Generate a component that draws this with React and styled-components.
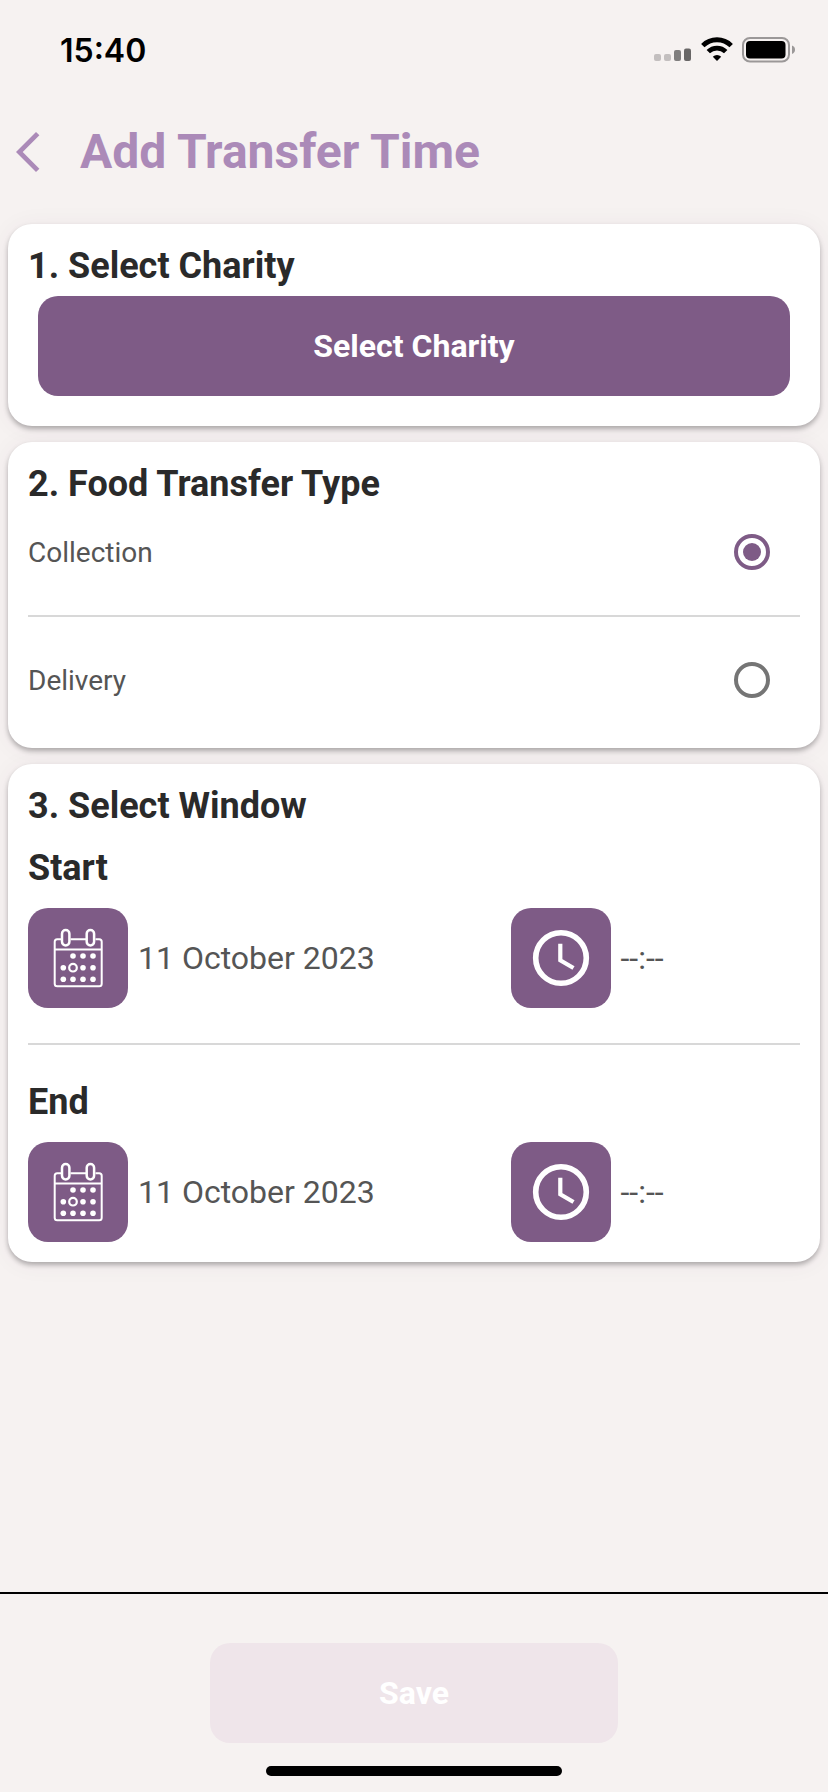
import React, { useState } from 'react'
import styled, { createGlobalStyle } from 'styled-components'

const App = () => {
  const [type, setType] = useState('collection')

  return (
    <Page>
      <GlobalStyle />
      <StatusBar>
        <Clock>15:40</Clock>
        <StatusIcons>
          <SignalIcon />
          <WifiIcon />
          <BatteryIcon />
        </StatusIcons>
      </StatusBar>
      <Header>
        <BackButton type="button" aria-label="Back">
          <svg width="24" height="40" viewBox="0 0 24 40">
            <path d="M20 0 23.4 3.2 6.7 20 23.4 36.8 20 40 0 20z" fill="currentColor" />
          </svg>
        </BackButton>
        <Title>Add Transfer Time</Title>
      </Header>
      <Main>
        <Card>
          <Heading>1. Select Charity</Heading>
          <CharityRow>
            <Button type="button">Select Charity</Button>
          </CharityRow>
        </Card>
        <Card>
          <Heading id="transfer-type">2. Food Transfer Type</Heading>
          <div role="radiogroup" aria-labelledby="transfer-type">
            <Option>
              Collection
              <Radio
                name="type"
                checked={type === 'collection'}
                onChange={() => setType('collection')}
              />
            </Option>
            <Divider $space={15} />
            <Option>
              Delivery
              <Radio
                name="type"
                checked={type === 'delivery'}
                onChange={() => setType('delivery')}
              />
            </Option>
          </div>
        </Card>
        <Card>
          <Heading>3. Select Window</Heading>
          <WindowTime label="Start" date="11 October 2023" time="--:--" spaced />
          <Divider $space={35} />
          <WindowTime label="End" date="11 October 2023" time="--:--" />
        </Card>
      </Main>
      <Footer>
        <SaveButton type="button" disabled>
          Save
        </SaveButton>
        <HomeIndicator />
      </Footer>
    </Page>
  )
}

const WindowTime = ({ label, date, time, spaced }) => (
  <>
    <SubHeading $spaced={spaced}>{label}</SubHeading>
    <Pickers>
      <Picker>
        <IconButton type="button" aria-label={`${label} date`}>
          <CalendarIcon />
        </IconButton>
        <Value>{date}</Value>
      </Picker>
      <Picker>
        <IconButton type="button" aria-label={`${label} time`}>
          <ClockIcon />
        </IconButton>
        <Value>{time}</Value>
      </Picker>
    </Pickers>
  </>
)

const SignalIcon = () => (
  <svg width="38" height="26" viewBox="0 0 38 26">
    <rect x="0" y="17" width="7" height="7" rx="2" fill="#c3bfbf" />
    <rect x="10" y="17" width="7" height="7" rx="2" fill="#c3bfbf" />
    <rect x="20" y="13" width="7" height="11" rx="2" fill="#807e7e" />
    <rect x="30" y="11.5" width="7" height="12.5" rx="2" fill="#686666" />
  </svg>
)

const WifiIcon = () => (
  <svg width="32" height="26" viewBox="0 0 32 26">
    <g fill="none" stroke="#000" strokeWidth="4.8">
      <path d="M1.8 8.6a20.2 20.2 0 0 1 28.4 0" />
      <path d="M7.3 14.6a12.4 12.4 0 0 1 17.4 0" />
    </g>
    <path d="M16 24l-4.2-4.3a6 6 0 0 1 8.4 0z" fill="#000" />
  </svg>
)

const BatteryIcon = () => (
  <svg width="54" height="26" viewBox="0 0 54 26">
    <rect x="1" y="1" width="46" height="23.5" rx="7" fill="none" stroke="#9b9898" strokeWidth="2" />
    <rect x="4" y="4" width="39.5" height="17.5" rx="4" fill="#000" />
    <path d="M50 8.5c2 .6 3 2.2 3 4.2s-1 3.6-3 4.2z" fill="#9b9898" />
  </svg>
)

const CalendarIcon = () => (
  <svg width="100" height="100" viewBox="0 0 100 100">
    <g fill="none" stroke="#fff" strokeWidth="2">
      <path d="M33 31.2H29.2a2.5 2.5 0 0 0-2.5 2.5V75.8a2.5 2.5 0 0 0 2.5 2.5H71.2a2.5 2.5 0 0 0 2.5-2.5V33.700a2.500 2.500 0 0 0-2.500-2.500H67.500M42.500 31.200H58M26.700 41.500H73.700" />
      <rect x="34" y="22" width="7.4" height="15.5" rx="3.7" strokeWidth="2.5" />
      <rect x="58.7" y="22" width="7.4" height="15.5" rx="3.7" strokeWidth="2.5" />
      <circle cx="45" cy="59.7" r="3.8" strokeWidth="2.2" />
    </g>
    <g fill="#fff">
      <circle cx="45" cy="48" r="2.8" />
      <circle cx="55" cy="48" r="2.8" />
      <circle cx="65" cy="48" r="2.8" />
      <circle cx="35.3" cy="59.7" r="2.8" />
      <circle cx="55" cy="59.7" r="2.8" />
      <circle cx="65" cy="59.7" r="2.8" />
      <circle cx="35.3" cy="71.3" r="2.8" />
      <circle cx="45" cy="71.3" r="2.8" />
      <circle cx="55" cy="71.3" r="2.8" />
      <circle cx="65" cy="71.3" r="2.8" />
    </g>
  </svg>
)

const ClockIcon = () => (
  <svg width="100" height="100" viewBox="0 0 100 100">
    <g fill="none" stroke="#fff">
      <circle cx="50" cy="50" r="25.3" strokeWidth="5.6" />
      <path d="M49.3 35.7V52.3L62.5 60" strokeWidth="4.2" />
    </g>
  </svg>
)

const GlobalStyle = createGlobalStyle`
  * {
    box-sizing: border-box;
  }
  body {
    margin: 0;
    background: #f6f2f1;
    font-family: 'Roboto', sans-serif;
  }
  svg {
    display: block;
  }
`

const Page = styled.div`
  min-height: 100vh;
  display: flex;
  flex-direction: column;
`

const StatusBar = styled.div`
  height: 100px;
  padding: 0 32px 0 60px;
  display: flex;
  align-items: center;
  justify-content: space-between;
`

const Clock = styled.span`
  font-family: 'Inter', sans-serif;
  font-weight: 600;
  font-size: 32px;
  color: #000;
`

const StatusIcons = styled.div`
  display: flex;
  gap: 9px;
`

const Header = styled.header`
  height: 104px;
  padding: 0 16px;
  display: flex;
  align-items: center;
  gap: 40px;
  color: #ab8ab8;
`

const BackButton = styled.button`
  padding: 0;
  border: 0;
  background: none;
  color: inherit;
`

const Title = styled.h1`
  margin: 0;
  font-weight: 700;
  font-size: 48px;
  line-height: 56px;
`

const Main = styled.main`
  flex: 1;
  padding: 20px 8px;
  display: flex;
  flex-direction: column;
  gap: 16px;
`

const Card = styled.section`
  padding: 20px;
  border-radius: 24px;
  background: #fff;
  box-shadow: 0 3px 5px rgba(0, 0, 0, 0.28), 0 2px 24px rgba(80, 40, 90, 0.06);
`

const Heading = styled.h2`
  height: 42px;
  margin: 0;
  font-weight: 700;
  font-size: 36px;
  line-height: 44px;
  color: #2a2a2a;
`

const SubHeading = styled(Heading).attrs({ as: 'h3' })`
  margin: ${({ $spaced }) => ($spaced ? '20px' : '0')} 0 20px;
`

const CharityRow = styled.div`
  padding: 10px;
`

const Button = styled.button`
  display: block;
  width: 100%;
  height: 100px;
  border: 0;
  border-radius: 20px;
  background: #7e5b86;
  font-family: inherit;
  font-weight: 700;
  font-size: 32px;
  color: #fff;
`

const SaveButton = styled(Button)`
  max-width: 408px;
  background: #efe5ea;
`

const Option = styled.label`
  height: 96px;
  padding-right: 30px;
  display: flex;
  align-items: center;
  justify-content: space-between;
  font-size: 28px;
  color: #555;
`

const Radio = styled.input.attrs({ type: 'radio' })`
  appearance: none;
  width: 36px;
  height: 36px;
  margin: 0;
  border: 4px solid #757575;
  border-radius: 50%;
  display: grid;
  place-items: center;
  &:checked {
    border-color: #7e5b86;
  }
  &:checked::before {
    content: '';
    width: 18px;
    height: 18px;
    border-radius: 50%;
    background: #7e5b86;
  }
`

const Divider = styled.hr`
  height: 2px;
  margin: ${({ $space }) => $space}px 0;
  border: 0;
  background: #d8d8d8;
`

const Pickers = styled.div`
  display: grid;
  grid-template-columns: 5fr 3fr;
`

const Picker = styled.div`
  display: flex;
  align-items: center;
  gap: 10px;
`

const IconButton = styled(Button)`
  flex: none;
  width: 100px;
  padding: 0;
`

const Value = styled.span`
  font-size: 32px;
  color: #555;
`

const Footer = styled.footer`
  padding: 49px 16px 16px;
  border-top: 2px solid #000;
  display: flex;
  flex-direction: column;
  align-items: center;
  gap: 23px;
`

const HomeIndicator = styled.div`
  width: 100%;
  max-width: 296px;
  height: 10px;
  border-radius: 5px;
  background: #000;
`

export default App
